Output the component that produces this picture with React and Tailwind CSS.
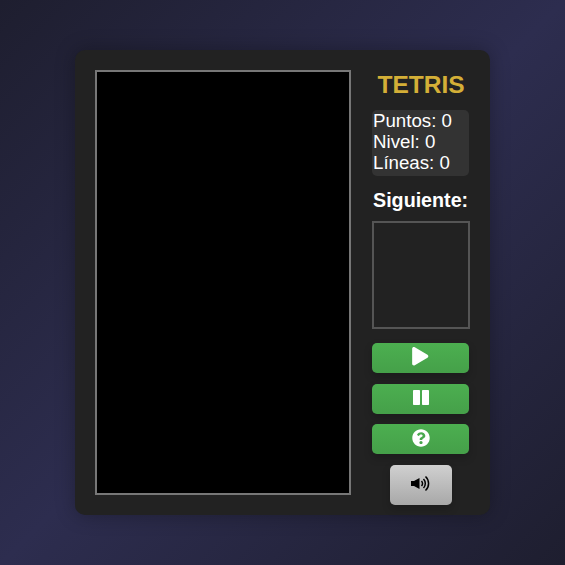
import React from "react";
import { FaPlay, FaQuestionCircle } from "react-icons/fa";

function GreenButton({ children, className }) {
  return (
    <button className={`w-[97px] h-[30px] shrink-0 flex items-center justify-center rounded-[5px] bg-gradient-to-b from-[#4caf50] to-[#45a049] text-white shadow-[0_4px_8px_rgba(0,0,0,0.2)] ${className}`}>
      {children}
    </button>
  );
}

export default function App() {
  return (
    <div className="w-[565px] h-[565px] flex items-start justify-center pt-[50px] bg-[linear-gradient(135deg,#1e1e2f_0%,#2d2d4f_50%,#1e1e2f_100%)] font-['Liberation_Sans',Arial,sans-serif]">
      <div className="w-[415px] h-[465px] flex items-start gap-[21px] p-5 pr-[21px] bg-[#222222] rounded-[10px] shadow-[0_0_20px_rgba(0,0,0,0.3)]">
        <div className="w-[256px] h-[425px] shrink-0 bg-black border-2 border-[#777777]" />
        <div className="w-[97px] flex flex-col items-stretch">
          <h1 className="h-[40px] shrink-0 text-center text-[24.5px] leading-[28px] pt-[1px] pl-[1px] font-bold text-[#d4af37] whitespace-nowrap">TETRIS</h1>
          <div className="h-[66px] shrink-0 rounded-[5px] bg-[#333333] pl-[1px] text-white text-[18.7px] leading-[21px] whitespace-nowrap">
            <div>Puntos: 0</div>
            <div>Nivel: 0</div>
            <div>Líneas: 0</div>
          </div>
          <div className="mt-[13px] h-[22px] pl-[1px] shrink-0 text-white text-[19.7px] leading-[22px] font-bold whitespace-nowrap">Siguiente:</div>
          <div className="mt-[10px] w-[98px] h-[108px] shrink-0 border-2 border-[#555555] bg-[#222222]" />
          <GreenButton className="mt-[14px]"><FaPlay className="text-[18.5px] mb-[3px]" /></GreenButton>
          <GreenButton className="mt-[11px]">
            <svg width="16" height="15" viewBox="0 0 16 15" fill="#fff" className="mb-[3px]">
              <rect x="0" y="0" width="7" height="15" rx="0.8" />
              <rect x="9" y="0" width="7" height="15" rx="0.8" />
            </svg>
          </GreenButton>
          <GreenButton className="mt-[10px]"><FaQuestionCircle className="text-[18px] mb-[2px]" /></GreenButton>
          <button className="self-center shrink-0 mt-[11px] w-[62px] h-[40px] flex items-center justify-center rounded-[5px] bg-gradient-to-b from-[#d0d0d0] to-[#a8a8a8] text-black shadow-[0_4px_8px_rgba(0,0,0,0.2)]">
            <svg width="19" height="17" viewBox="0 0 19 17" fill="none" className="mb-[3px]">
              <path d="M0 6h3L8.5 3v11L3 11H0z" fill="#000" />
              <path d="M10.5 6a3.5 3.5 0 0 1 0 5" stroke="#000" strokeWidth="1.5" />
              <path d="M12.5 4a6.5 6.5 0 0 1 0 9" stroke="#000" strokeWidth="1.5" />
              <path d="M14.5 1.5a9.5 9.5 0 0 1 0 14" stroke="#000" strokeWidth="1.5" />
            </svg>
          </button>
        </div>
      </div>
    </div>
  );
}
